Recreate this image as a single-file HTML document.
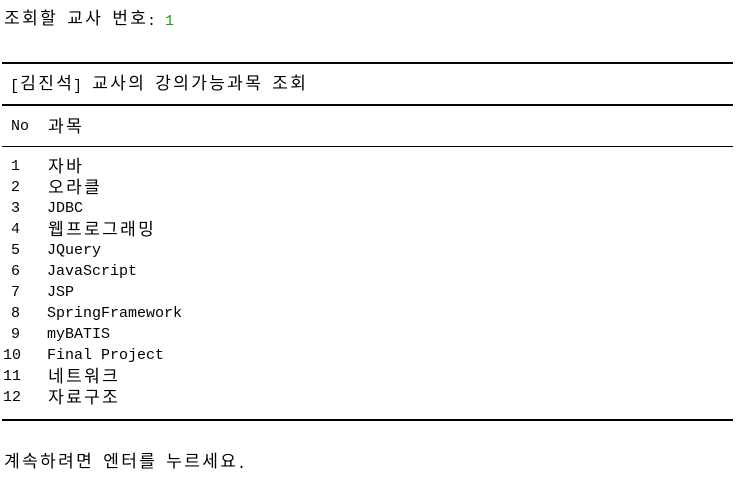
<!DOCTYPE html>
<html><head><meta charset="utf-8"><style>
body{margin:0;width:741px;height:491px;background:#fff;position:relative;overflow:hidden;font-family:"Liberation Mono","Noto Sans CJK KR",monospace;font-size:15px;color:#000}
.t{position:absolute;line-height:20px;height:20px;white-space:pre;margin-top:1px}
i{display:inline-block;width:18px;font-style:normal;text-align:center;vertical-align:baseline;line-height:1;font-size:17px;font-family:"Noto Sans CJK KR",sans-serif;position:relative;top:-1px}
.l{position:absolute;left:2px;width:731px;background:#000}
</style></head><body>
<div class="t" style="left:3px;top:8px"><i>조</i><i>회</i><i>할</i> <i>교</i><i>사</i> <i>번</i><i>호</i>: <span style="color:#13a10e">1</span></div>
<div class="l" style="top:62px;height:2px"></div>
<div class="t" style="left:10px;top:73px">[<i>김</i><i>진</i><i>석</i>] <i>교</i><i>사</i><i>의</i> <i>강</i><i>의</i><i>가</i><i>능</i><i>과</i><i>목</i> <i>조</i><i>회</i></div>
<div class="l" style="top:104px;height:2px"></div>
<div class="t" style="left:11px;top:116px">No</div><div class="t" style="left:47px;top:116px"><i>과</i><i>목</i></div>
<div class="l" style="top:146px;height:1px"></div>
<div class="t" style="left:11px;top:156px">1</div><div class="t" style="left:47px;top:156px"><i>자</i><i>바</i></div>
<div class="t" style="left:11px;top:177px">2</div><div class="t" style="left:47px;top:177px"><i>오</i><i>라</i><i>클</i></div>
<div class="t" style="left:11px;top:198px">3</div><div class="t" style="left:47px;top:198px">JDBC</div>
<div class="t" style="left:11px;top:219px">4</div><div class="t" style="left:47px;top:219px"><i>웹</i><i>프</i><i>로</i><i>그</i><i>래</i><i>밍</i></div>
<div class="t" style="left:11px;top:240px">5</div><div class="t" style="left:47px;top:240px">JQuery</div>
<div class="t" style="left:11px;top:261px">6</div><div class="t" style="left:47px;top:261px">JavaScript</div>
<div class="t" style="left:11px;top:282px">7</div><div class="t" style="left:47px;top:282px">JSP</div>
<div class="t" style="left:11px;top:303px">8</div><div class="t" style="left:47px;top:303px">SpringFramework</div>
<div class="t" style="left:11px;top:324px">9</div><div class="t" style="left:47px;top:324px">myBATIS</div>
<div class="t" style="left:3px;top:345px">10</div><div class="t" style="left:47px;top:345px">Final Project</div>
<div class="t" style="left:3px;top:366px">11</div><div class="t" style="left:47px;top:366px"><i>네</i><i>트</i><i>워</i><i>크</i></div>
<div class="t" style="left:3px;top:387px">12</div><div class="t" style="left:47px;top:387px"><i>자</i><i>료</i><i>구</i><i>조</i></div>
<div class="l" style="top:419px;height:2px"></div>
<div class="t" style="left:3px;top:451px"><i>계</i><i>속</i><i>하</i><i>려</i><i>면</i> <i>엔</i><i>터</i><i>를</i> <i>누</i><i>르</i><i>세</i><i>요</i>.</div>
</body></html>
